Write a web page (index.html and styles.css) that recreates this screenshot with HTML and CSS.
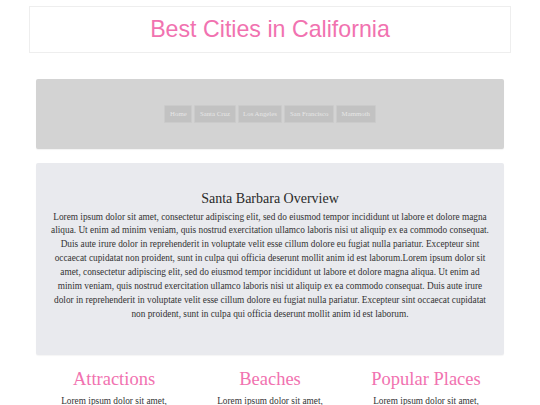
FILE: index.html
```html
<!DOCTYPE html>
<html>
<head>
<meta charset="utf-8">
<link rel="stylesheet" href="styles.css">
</head>
<body>
<div class="wrap">
  <header class="header">
    <h1 class="title">Best Cities in California</h1>
  </header>
  <nav class="nav">
    <a class="btn">Home</a>
    <a class="btn">Santa Cruz</a>
    <a class="btn">Los Angeles</a>
    <a class="btn">San Francisco</a>
    <a class="btn">Mammoth</a>
  </nav>
  <section class="overview">
    <h2 class="ov-title">Santa Barbara Overview</h2>
    <p class="ov-text">Lorem ipsum dolor sit amet, consectetur adipiscing elit, sed do eiusmod tempor incididunt ut labore et dolore magna aliqua. Ut enim ad minim veniam, quis nostrud exercitation ullamco laboris nisi ut aliquip ex ea commodo consequat. Duis aute irure dolor in reprehenderit in voluptate velit esse cillum dolore eu fugiat nulla pariatur. Excepteur sint occaecat cupidatat non proident, sunt in culpa qui officia deserunt mollit anim id est laborum.Lorem ipsum dolor sit amet, consectetur adipiscing elit, sed do eiusmod tempor incididunt ut labore et dolore magna aliqua. Ut enim ad minim veniam, quis nostrud exercitation ullamco laboris nisi ut aliquip ex ea commodo consequat. Duis aute irure dolor in reprehenderit in voluptate velit esse cillum dolore eu fugiat nulla pariatur. Excepteur sint occaecat cupidatat non proident, sunt in culpa qui officia deserunt mollit anim id est laborum.</p>
  </section>
  <section class="cols">
    <div class="col">
      <h3 class="col-title">Attractions</h3>
      <p class="col-text">Lorem ipsum dolor sit amet, consectetur adipiscing elit, sed do eiusmod tempor incididunt ut labore et dolore magna aliqua.</p>
    </div>
    <div class="col">
      <h3 class="col-title">Beaches</h3>
      <p class="col-text">Lorem ipsum dolor sit amet, consectetur adipiscing elit, sed do eiusmod tempor incididunt ut labore et dolore magna aliqua.</p>
    </div>
    <div class="col">
      <h3 class="col-title">Popular Places</h3>
      <p class="col-text">Lorem ipsum dolor sit amet, consectetur adipiscing elit, sed do eiusmod tempor incididunt ut labore et dolore magna aliqua.</p>
    </div>
  </section>
</div>
</body>
</html>
```
FILE: styles.css
```css
html, body {
  margin: 0;
  padding: 0;
  background: #ffffff;
}
body {
  font-family: "Liberation Serif", serif;
  color: #333333;
}
.wrap {
  width: 482px;
  margin: 0 auto;
  padding-top: 6px;
}
.header {
  height: 45px;
  border: 1px solid #eeeeee;
  display: flex;
  align-items: center;
  justify-content: center;
}
.title {
  margin: 0;
  font-family: "Liberation Sans", Arial, sans-serif;
  font-weight: normal;
  font-size: 23.2px;
  color: #f172b0;
}
.nav {
  margin: 26px 7px 0;
  height: 70px;
  background: #d3d3d3;
  border-radius: 2px;
  display: flex;
  align-items: center;
  justify-content: center;
  gap: 2px;
  box-shadow: 0 1px 1px rgba(0,0,0,0.05);
}
.btn {
  display: block;
  background: #c2c2c2;
  color: #e6e6e6;
  font-size: 6.8px;
  line-height: 16px;
  height: 16px;
  padding: 0 4.6px;
  border-radius: 1px;
  border: 0.5px solid #cbcbcb;
}
.overview {
  margin: 14px 7px 0;
  height: 192px;
  background: #e9eaee;
  border-radius: 2px;
  box-shadow: 0 1px 1px rgba(0,0,0,0.04);
  padding: 27px 12px 0;
  box-sizing: border-box;
  text-align: center;
}
.ov-title {
  margin: 0 0 3.5px;
  font-weight: normal;
  font-size: 14px;
  line-height: 17px;
  color: #2a2a2a;
}
.ov-text {
  margin: 0;
  font-size: 9.3px;
  line-height: 13.9px;
  color: #333333;
}
.cols {
  margin: 13px 7px 0;
  display: grid;
  grid-template-columns: 1fr 1fr 1fr;
  text-align: center;
}
.col-title {
  margin: 0 0 5px;
  font-weight: normal;
  font-size: 18.5px;
  line-height: 22px;
  color: #f172b0;
}
.col-text {
  margin: 0 22px;
  font-size: 9.3px;
  line-height: 13.9px;
  color: #333333;
}
```
